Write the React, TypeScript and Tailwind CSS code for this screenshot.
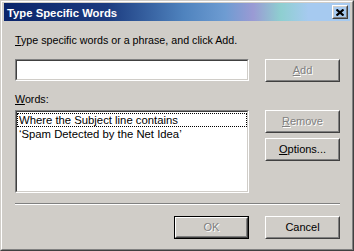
import React from "react";

const font = { fontFamily: '"Liberation Sans", Arial, sans-serif' };

function Raised({
  children,
  isDefault,
  className = "",
}: {
  children: React.ReactNode;
  isDefault?: boolean;
  className?: string;
}) {
  const bevel = (
    <div className="flex-1 flex border border-t-white border-l-white border-b-[#404040] border-r-[#404040]">
      <div className="flex-1 flex items-center justify-center border border-t-[#d0cdc8] border-l-[#d0cdc8] border-b-[#808080] border-r-[#808080]">
        {children}
      </div>
    </div>
  );
  if (isDefault) {
    return <div className={`flex border border-black ${className}`}>{bevel}</div>;
  }
  return <div className={`flex ${className}`}>{bevel}</div>;
}

function Button({
  label,
  mnemonic,
  disabled,
  isDefault,
}: {
  label: string;
  mnemonic?: number;
  disabled?: boolean;
  isDefault?: boolean;
}) {
  const i = mnemonic ?? -1;
  return (
    <Raised isDefault={isDefault} className="w-[75px] h-[23px] shrink-0">
      <span
        className={`text-[11px] leading-[13px] ${
          disabled ? "text-[#808080] [text-shadow:1px_1px_0_#ffffff]" : "text-black"
        }`}
      >
        {i >= 0 ? (
          <>
            {label.slice(0, i)}
            <span className="underline underline-offset-1">{label[i]}</span>
            {label.slice(i + 1)}
          </>
        ) : (
          label
        )}
      </span>
    </Raised>
  );
}

function Sunken({ children, className = "" }: { children?: React.ReactNode; className?: string }) {
  return (
    <div className={`flex border border-t-[#808080] border-l-[#808080] border-b-white border-r-white ${className}`}>
      <div className="flex-1 flex flex-col bg-white border border-t-[#404040] border-l-[#404040] border-b-[#d0cdc8] border-r-[#d0cdc8]">
        {children}
      </div>
    </div>
  );
}

export default function App() {
  return (
    <div style={font} className="w-[354px] h-[251px] flex bg-[#d0cdc8] text-black">
      {/* window frame */}
      <div className="flex-1 flex border border-t-[#d0cdc8] border-l-[#d0cdc8] border-b-[#404040] border-r-[#404040]">
        <div className="flex-1 flex flex-col pt-px px-[2px] border border-t-white border-l-white border-b-[#808080] border-r-[#808080]">
          {/* title bar */}
          <div className="h-[18px] flex items-center justify-between pl-[3px] pr-[2px] bg-[linear-gradient(to_right,#0a246a_0%,#1c3c80_30%,#4f83be_52%,#6e9cd2_64%,#9a9ad4_72%,#8ecfd0_80%,#a6caf0_88%,#a6caf0_100%)]">
            <span className="text-white font-bold text-[11.3px] leading-[14px] pt-px">
              Type Specific Words
            </span>
            <Raised className="w-[16px] h-[14px]">
              <svg width="8" height="7" viewBox="0 0 8 7">
                <path d="M0.5 0.5 L7.5 6.5 M7.5 0.5 L0.5 6.5" stroke="black" strokeWidth="2.2" />
              </svg>
            </Raised>
          </div>

          {/* body */}
          <div className="flex flex-col pl-[11px] pr-[10px]">
            <div className="mt-[13px] h-[13px] text-[10.7px] leading-[13px]">
              <span className="underline underline-offset-1">T</span>ype specific words or a phrase, and click Add.
            </div>

            <div className="mt-[12px] flex items-start">
              <Sunken className="w-[234px] h-[22px]" />
              <div className="ml-[16px]">
                <Button label="Add" mnemonic={0} disabled />
              </div>
            </div>

            <div className="mt-[11px] h-[13px] text-[10.7px] leading-[13px]">
              <span className="underline underline-offset-1">W</span>ords:
            </div>

            <div className="mt-[4px] flex items-start">
              <Sunken className="w-[234px] h-[83px]">
                <div className="mt-px h-[14px] flex items-center border border-dotted border-black text-[11.3px] leading-[12px] pl-px">
                  Where the Subject line contains
                </div>
                <div className="h-[14px] flex items-center text-[11.3px] leading-[13px] pl-[2px]">
                  ‘Spam Detected by the Net Idea’
                </div>
              </Sunken>
              <div className="ml-[16px] flex flex-col gap-[5px]">
                <Button label="Remove" mnemonic={0} disabled />
                <Button label="Options..." mnemonic={0} />
              </div>
            </div>

            <div className="mt-[10px] h-[2px] border-t border-t-[#808080] border-b border-b-white" />

            <div className="mt-[11px] flex justify-end gap-[16px]">
              <Button label="OK" disabled isDefault />
              <Button label="Cancel" />
            </div>
          </div>
        </div>
      </div>
    </div>
  );
}
